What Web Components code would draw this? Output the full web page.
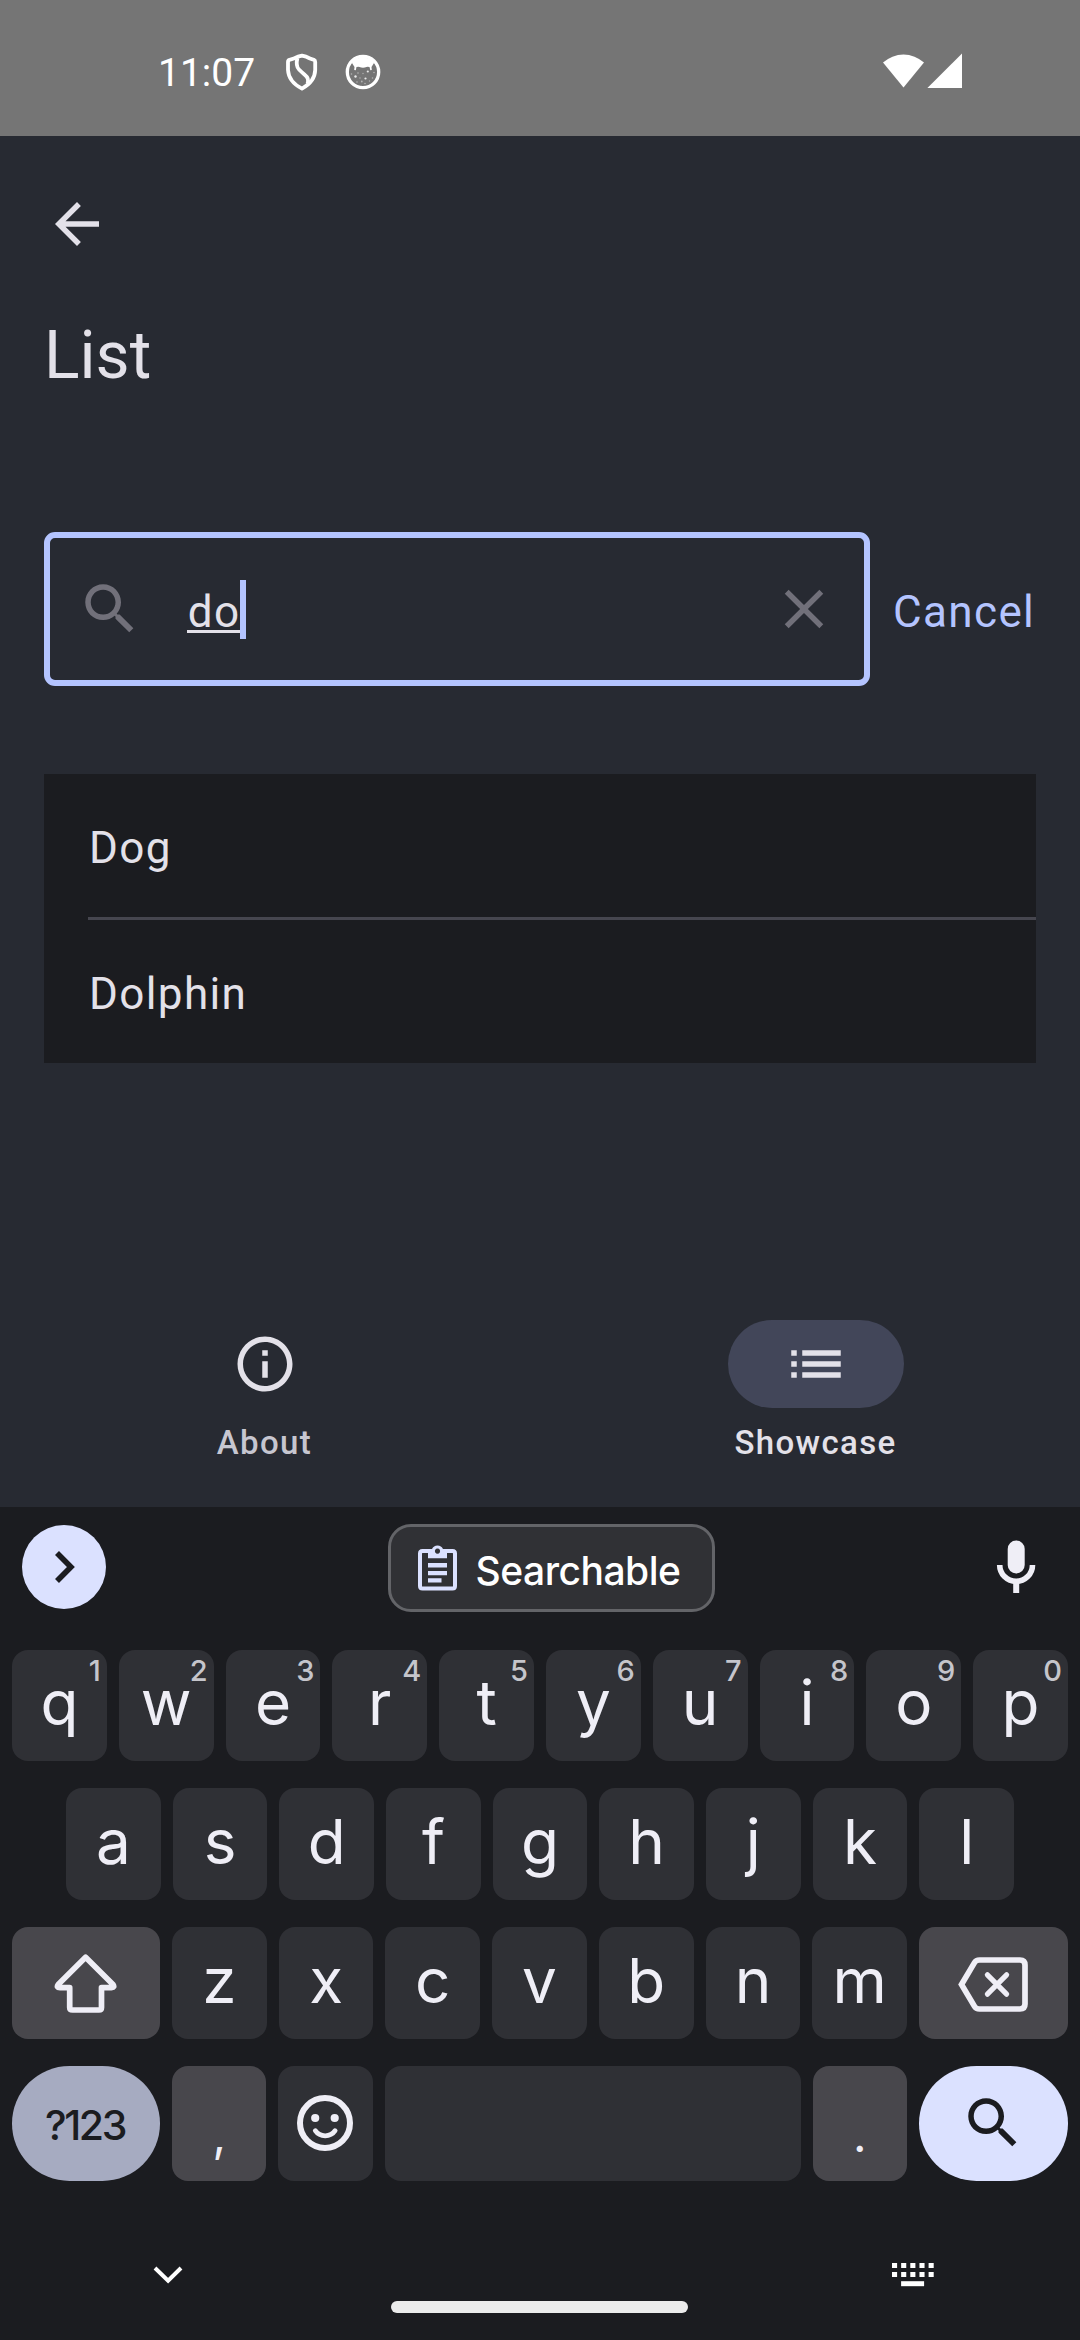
<!DOCTYPE html>
<html lang="en">
<head>
<meta charset="utf-8">
<title>List</title>
<style>
  html, body { margin: 0; padding: 0; background: #1b1c20; }
</style>
</head>
<body>
<list-app></list-app>
<script>
// Icon artwork: [width, height, markup]
const MATERIAL_SEARCH = '<path transform="scale(2.75)" d="M15.5 14h-.79l-.28-.27C15.41 12.59 16 11.11 16 9.5 16 5.91 13.09 3 9.5 3S3 5.91 3 9.5 5.91 16 9.5 16c1.61 0 3.09-.59 4.23-1.57l.27.28v.79l5 4.99L20.49 19l-4.99-5zm-6 0C7.01 14 5 11.99 5 9.5S7.01 5 9.5 5 14 7.01 14 9.5 11.99 14 9.5 14z"/>';
const ICONS = {
  shield: [32, 38, '<g fill="none" stroke="currentColor" stroke-width="3.8" stroke-linejoin="round"><path d="M16 2.6 L20 3.6 Q24 6 28 6.8 Q29.2 7.2 29.2 9 L29.2 17 C29 25 24.5 31 16 35.6 C7 31 2.4 25 2 17 L2 9 Q2 7.2 3.4 6.8 Q8 6 12 3.6 Z"/><path d="M11.4 5 Q9.5 13 13 16.5 Q15.5 19 19 22 Q23.5 25.5 21.5 31"/></g>'],
  cat: [36, 36, '<circle cx="18" cy="18" r="15.7" fill="none" stroke="currentColor" stroke-width="3.3"/><path d="M7.5 6.5 Q18 .5 28.5 6.5 L29 9 L26.5 13 L26.8 16 L25.3 16.2 L24.5 13 Q22 12.5 21.5 13 Q18 14.5 14.5 13 Q14 12.5 11.500 13 L10.8 16.2 L9.2 16 L9.5 13 L7 9Z"/><g opacity=".85"><circle cx="10.5" cy="22.5" r="1.2"/><circle cx="20.5" cy="24.5" r="1.1"/><circle cx="22.8" cy="17.5" r="1.1"/></g><g opacity=".45"><circle cx="6.5" cy="20" r=".8"/><circle cx="13" cy="19" r=".8"/><circle cx="18" cy="19.5" r=".7"/><circle cx="29" cy="18.5" r=".8"/><circle cx="27.500" cy="24" r=".8"/><circle cx="15" cy="24" r=".7"/><circle cx="16.8" cy="27.500" r=".9"/><circle cx="20" cy="29.500" r=".8"/><circle cx="12" cy="28" r=".8"/><circle cx="24.5" cy="27" r=".7"/></g>'],
  wifi: [42, 36, '<path d="M0 9.5 A30.5 30.5 0 0 1 41 9.5 L20.5 34.5Z"/>'],
  signal: [36, 36, '<path d="M35 .5 V35 H.4Z"/>'],
  back: [66, 66, '<path transform="scale(2.75)" d="M20 11H7.83l5.59-5.59L12 4l-8 8 8 8 1.41-1.41L7.83 13H20v-2z"/>'],
  search: [66, 66, MATERIAL_SEARCH],
  close: [66, 66, '<path transform="scale(2.75)" d="M19 6.41L17.59 5 12 10.59 6.41 5 5 6.41 10.59 12 5 17.59 6.41 19 12 13.41 17.59 19 19 17.59 13.41 12z"/>'],
  info: [66, 66, '<path transform="scale(2.75)" d="M11 7h2v2h-2zm0 4h2v6h-2zm1-9C6.48 2 2 6.48 2 12s4.48 10 10 10 10-4.48 10-10S17.52 2 12 2zm0 18c-4.41 0-8-3.59-8-8s3.59-8 8-8 8 3.59 8 8-3.59 8-8 8z"/>'],
  list: [66, 66, '<path transform="scale(2.75)" d="M3 13h2v-2H3v2zm0 4h2v-2H3v2zm0-8h2V7H3v2zm4 4h14v-2H7v2zm0 4h14v-2H7v2zM7 7v2h14V7H7z"/>'],
  expand: [84, 84, '<path d="M35 28.1 L48.9 42 L35 55.9" fill="none" stroke="currentColor" stroke-width="5.6"/>'],
  clipboard: [40, 48, '<path fill="none" stroke="currentColor" stroke-width="4" d="M12 7 H4.5 Q2 7 2 9.5 V42 Q2 44.5 4.5 44.5 H34.5 Q37 44.5 37 42 V9.5 Q37 7 34.5 7 H27"/><path fill-rule="evenodd" d="M10 5 H14 A6 6 0 0 1 25 5 H29 V14.2 H10Z M19.5 4.5 a2.6 2.6 0 1 0 .01 0Z"/><path d="M10 19 H29 V23.5 H10Z M10 27 H29 V31.2 H10Z M10 34.3 H23.5 V38.5 H10Z"/>'],
  mic: [40, 54, '<rect x="11.7" y=".4" width="17" height="33.2" rx="8.5"/><path fill="none" stroke="currentColor" stroke-width="5.6" d="M3.7 25 A16.4 16.4 0 0 0 36.5 25"/><path d="M17.2 41 h6 v12 h-6z"/>'],
  shift: [64, 62, '<path fill="none" stroke="currentColor" stroke-width="5.7" stroke-linejoin="round" d="M31.6 5.3 L59 32.5 Q61 35.7 57.5 35.7 H47.5 V55.5 Q47.5 58 45 58 H18.5 Q15.7 58 15.7 55.5 V35.7 H6 Q2 35.7 4.2 32.5 Z"/>'],
  backspace: [72, 56, '<g fill="none" stroke="currentColor" stroke-width="5.7"><path d="M3.5 27.5 L16.5 5.6 Q18 3 21.5 3 H62 Q67 3 67 8 V47 Q67 52 62 52 H21.5 Q18 52 16.5 49.4 Z"/><path stroke-width="5.2" stroke-linecap="round" d="M29.4 17.8 L48.6 37.2 M48.6 17.8 L29.4 37.2"/></g>'],
  emoji: [56, 56, '<g fill="none" stroke="currentColor" stroke-width="6"><circle cx="28" cy="28" r="25"/><path stroke-width="4.8" stroke-linecap="round" d="M18.3 35.7 Q21.8 40.8 28.2 40.8 Q34.6 40.8 38.1 35.7"/></g><circle cx="18.2" cy="23" r="4.1"/><circle cx="37.7" cy="23" r="4.1"/>'],
  collapse: [30, 20, '<path fill="none" stroke="currentColor" stroke-width="4" d="M2 2 L15.100 14.700 L28 2"/>'],
  keyboard: [44, 24, [0, 9.15, 18.3, 27.45, 36.6].map(x => `<path d="M${x} 0h5.1v5h-5.1zM${x} 9h5.1v5h-5.1z"/>`).join('') + '<path d="M9.1 18.2h23v5h-23z"/>']
};

function define(name, css, html) {
  const tpl = document.createElement('template');
  tpl.innerHTML = `<style>*{box-sizing:border-box}${css}</style>${html}`;
  customElements.define(name, class extends HTMLElement {
    constructor() {
      super();
      this.attachShadow({ mode: 'open' }).appendChild(tpl.content.cloneNode(true));
    }
  });
}

customElements.define('ui-icon', class extends HTMLElement {
  connectedCallback() {
    if (this.shadowRoot) return;
    const [w, h, art] = ICONS[this.getAttribute('name')];
    this.attachShadow({ mode: 'open' }).innerHTML =
      `<style>:host{display:block;flex:none;width:${w}px;height:${h}px}svg{display:block}</style>
       <svg width="${w}" height="${h}" viewBox="0 0 ${w} ${h}" fill="currentColor">${art}</svg>`;
  }
});

define('status-bar', `
  :host { display: flex; height: 136px; flex: none; background: #757575; color: #fff;
          font: 39px/52px Roboto, sans-serif; padding: 0 117px 0 158px; align-items: flex-start; }
  .time { width: 128px; margin-top: 47px; }
  .shield { margin-top: 53px; } .cat { margin: 54px 0 0 27px; }
  .right { display: flex; margin: 53px 0 0 auto; gap: 2px; }
`, `<span class="time">11:07</span><ui-icon class="shield" name="shield"></ui-icon><ui-icon class="cat" name="cat"></ui-icon>
  <div class="right"><ui-icon name="wifi"></ui-icon><ui-icon name="signal"></ui-icon></div>`);

define('app-header', `
  :host { display: flex; flex-direction: column; padding: 55px 44px 0; height: 396px; flex: none; color: #e3e1e9; }
  h1 { margin: 55px 0 0; font: 400 66px/88px Roboto, sans-serif; }
`, `<ui-icon name="back"></ui-icon><h1><slot></slot></h1>`);

define('search-row', `
  :host { display: flex; align-items: center; padding: 0 44px; height: 154px; flex: none; font: 44px/66px Roboto, sans-serif; letter-spacing: 1.375px; }
  .field { display: flex; align-items: center; width: 826px; height: 154px; border: 6px solid #b4c4ff; border-radius: 11px; padding: 0 27px; color: #71707a; }
  .text { display: flex; flex: 1; align-items: center; margin-left: 44px; color: #e3e1e9; }
  .word { height: 54px; margin-bottom: 6px; padding-left: .7px; border-bottom: 3px solid #e3e1e9; }
  .caret { width: 6px; height: 59px; background: #b4c4ff; }
  .cancel { margin: 6px 0 0 23px; color: #b4c4ff; }
`, `<div class="field"><ui-icon name="search"></ui-icon>
    <div class="text"><span class="word"><slot></slot></span><span class="caret"></span></div>
    <ui-icon name="close"></ui-icon></div><span class="cancel">Cancel</span>`);

define('result-list', `
  :host { display: flex; flex-direction: column; gap: 3px; margin: 88px 44px 0; background: #1b1c20; flex: none; }
`, `<slot></slot>`);

define('result-item', `
  :host { display: flex; align-items: center; position: relative; height: 143px; padding: 4px 44px 0 45px; box-sizing: border-box; font: 44px/66px Roboto, sans-serif; letter-spacing: 1.375px; color: #e3e1e9; }
  :host([divided])::after { content: ""; position: absolute; left: 44px; right: 0; bottom: -3px; height: 3px; background: #46464f; }
`, `<slot></slot>`);

define('nav-tabs', `
  :host { display: flex; gap: 22px; margin-top: auto; height: 187px; flex: none; }
`, `<slot></slot>`);

define('nav-tab', `
  :host { display: flex; flex: 1; flex-direction: column; align-items: center; color: #e3e1e9; }
  .pill { display: flex; width: 176px; height: 88px; align-items: center; justify-content: center; border-radius: 44px; background: var(--pill, transparent); }
  .label { margin-top: 13px; font: 500 33px/44px Roboto, sans-serif; letter-spacing: 1.375px; color: var(--label, #c6c6d0); }
  :host([selected]) { --pill: #424659; --label: #e3e1e9; }
`, `<div class="pill"><slot name="icon"></slot></div><span class="label"><slot></slot></span>`);

define('suggestion-bar', `
  :host { display: flex; height: 143px; flex: none; padding: 17px 44px 0 22px; align-items: flex-start; justify-content: space-between; }
  .more { width: 84px; height: 84px; margin-top: 1px; border-radius: 50%; background: #dbe1ff; color: #1b1c20; }
  .clip { display: flex; width: 327px; height: 88px; padding: 17px 0 0 27px; border: 3px solid #636468; border-radius: 23px; background: #303135; color: #dbe1ff; gap: 18px; }
  .clip span { margin-top: -3px; font: 500 39px/60px Inter, sans-serif; letter-spacing: -.5px; color: #fff; white-space: nowrap; }
  .mic { margin-top: 16px; color: #efeef6; }
`, `<ui-icon class="more" name="expand"></ui-icon><div class="clip"><ui-icon name="clipboard"></ui-icon><span><slot></slot></span></div><ui-icon class="mic" name="mic"></ui-icon>`);

define('key-row', `
  :host { display: flex; gap: 12px; padding: 0 12px; height: 112px; flex: none; }
  :host([inset]) { padding: 0 66px; }
`, `<slot></slot>`);

customElements.define('key-cap', class extends HTMLElement {
  connectedCallback() {
    if (this.shadowRoot) return;
    const hint = this.getAttribute('hint');
    this.attachShadow({ mode: 'open' }).innerHTML = `<style>
      :host { display: flex; position: relative; flex: 1 1 0; min-width: 0; box-sizing: border-box; align-items: center; justify-content: center;
              border-radius: 16px; background: #2f3035; color: #efeef6; font: 400 62px/80px Inter, sans-serif; padding-bottom: 5px; }
      :host([kind=fn]), :host([kind=punct]) { background: #48474c; }
      :host([kind=fn]) { flex: 0 0 148px; padding: 0; }
      :host([kind=fn][wide]) { flex-basis: 149px; }
      :host([kind=punct]) { font-size: 47px; padding: 22px 0 0; }
      :host([kind=icon]) { padding: 0; }
      :host([kind=space]) { flex: 0 0 416px; }
      :host([kind=mode]), :host([kind=go]) { flex: 0 0 148px; border-radius: 58px; color: #1b1c20; padding: 0; }
      :host([kind=mode]) { background: #a6abc1; font-size: 41px; font-weight: 500; letter-spacing: -2.4px; padding: 3px 2px 0 0; }
      :host([kind=go]) { flex-basis: 149px; background: #dbe1ff; }
      small { position: absolute; right: 6px; top: 3px; font: 500 29px/36px Inter, sans-serif; color: #c5c5cb; }
    </style><slot></slot>${hint ? `<small>${hint}</small>` : ''}`;
  }
});

define('soft-keyboard', `
  :host { display: flex; flex-direction: column; height: 833px; flex: none; background: #1b1c20; }
  .keys { display: flex; flex-direction: column; gap: 27px; }
  .first { height: 111px; } .last { height: 115px; }
  .nav { display: flex; justify-content: space-between; align-items: flex-start; padding: 82px 144px 0 153px; color: #fff; }
  .nav ui-icon:first-child { margin-top: 3px; }
  .home { width: 297px; height: 12px; margin: 14px 0 0 391px; border-radius: 6px; background: #ececec; }
  .smile, .go, .shift { margin-top: -1px; } .back { margin-top: 4px; }
`, `<suggestion-bar>Searchable</suggestion-bar>
  <div class="keys">
    <key-row class="first">${[...'qwertyuiop'].map((k, i) => `<key-cap hint="${(i + 1) % 10}">${k}</key-cap>`).join('')}</key-row>
    <key-row inset>${[...'asdfghjkl'].map(k => `<key-cap>${k}</key-cap>`).join('')}</key-row>
    <key-row><key-cap kind="fn"><ui-icon class="shift" name="shift"></ui-icon></key-cap>${[...'zxcvbnm'].map(k => `<key-cap>${k}</key-cap>`).join('')}<key-cap kind="fn" wide><ui-icon class="back" name="backspace"></ui-icon></key-cap></key-row>
    <key-row class="last"><key-cap kind="mode">?123</key-cap><key-cap kind="punct">,</key-cap><key-cap kind="icon"><ui-icon class="smile" name="emoji"></ui-icon></key-cap><key-cap kind="space"></key-cap><key-cap kind="punct">.</key-cap><key-cap kind="go"><ui-icon class="go" name="search"></ui-icon></key-cap></key-row>
  </div>
  <div class="nav"><ui-icon name="collapse"></ui-icon><ui-icon name="keyboard"></ui-icon></div>
  <div class="home"></div>`);

define('list-app', `
  :host { display: flex; flex-direction: column; width: 1080px; height: 2340px; overflow: hidden; }
  main { display: flex; flex: 1; flex-direction: column; background: #272a32; min-height: 0; }
`, `<status-bar></status-bar>
  <main>
    <app-header>List</app-header>
    <search-row>do</search-row>
    <result-list><result-item divided>Dog</result-item><result-item>Dolphin</result-item></result-list>
    <nav-tabs>
      <nav-tab><ui-icon slot="icon" name="info"></ui-icon>About</nav-tab>
      <nav-tab selected><ui-icon slot="icon" name="list"></ui-icon>Showcase</nav-tab>
    </nav-tabs>
  </main>
  <soft-keyboard></soft-keyboard>`);
</script>
</body>
</html>
